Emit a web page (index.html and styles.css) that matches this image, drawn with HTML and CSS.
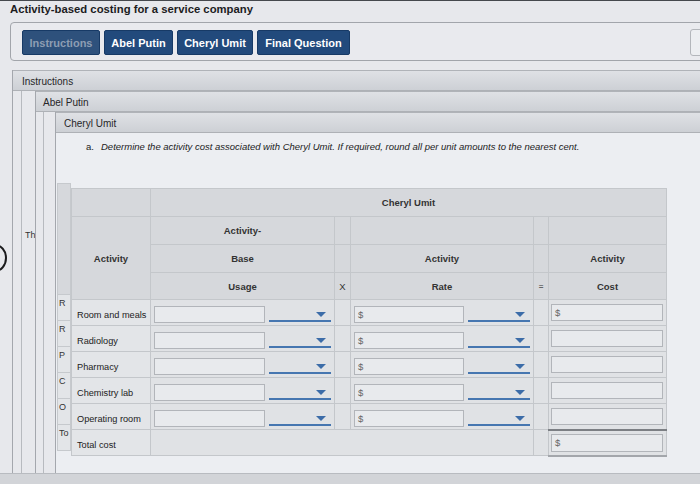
FILE: index.html
```html
<!DOCTYPE html>
<html>
<head>
<meta charset="utf-8">
<title>Activity-based costing for a service company</title>
<link rel="stylesheet" href="styles.css">
</head>
<body>
<div class="page">
  <div class="ring"></div>
  <h1 class="title">Activity-based costing for a service company</h1>
  <div class="tabs">
    <button class="tab tab-current w1">Instructions</button>
    <button class="tab w2">Abel Putin</button>
    <button class="tab w3">Cheryl Umit</button>
    <button class="tab w4">Final Question</button>
    <div class="tab-aux"></div>
  </div>

  <div class="panel p1">
    <div class="panel-head">Instructions</div>
    <div class="panel-body">
      <div class="gutter g1"><div class="gutter-line"><span class="ghost-text">Th</span></div></div>
      <div class="panel p2">
        <div class="panel-head">Abel Putin</div>
        <div class="panel-body">
          <div class="gutter g2"><div class="gutter-line"></div></div>
          <div class="panel p3">
            <div class="panel-head">Cheryl Umit</div>
            <div class="content">
              <p class="question"><span class="q-num">a.</span><em>Determine the activity cost associated with Cheryl Umit. If required, round all per unit amounts to the nearest cent.</em></p>
              <div class="work">
                <div class="ghost-col">
                  <div class="ghost-head"></div>
                  <div class="ghost-cell">R</div>
                  <div class="ghost-cell">R</div>
                  <div class="ghost-cell">P</div>
                  <div class="ghost-cell">C</div>
                  <div class="ghost-cell">O</div>
                  <div class="ghost-cell">To</div>
                </div>
                <table class="grid">
                  <colgroup>
                    <col class="c1"><col class="c2"><col class="c3"><col class="c4"><col class="c5"><col class="c6">
                  </colgroup>
                  <tr class="h1">
                    <th></th>
                    <th colspan="5">Cheryl Umit</th>
                  </tr>
                  <tr class="h2">
                    <th rowspan="3">Activity</th>
                    <th>Activity-</th>
                    <th></th><th></th><th></th><th></th>
                  </tr>
                  <tr class="h3">
                    <th>Base</th>
                    <th></th>
                    <th>Activity</th>
                    <th></th>
                    <th>Activity</th>
                  </tr>
                  <tr class="h4">
                    <th>Usage</th>
                    <th class="op">X</th>
                    <th>Rate</th>
                    <th class="op eq">=</th>
                    <th>Cost</th>
                  </tr>
                  <tr class="row">
                    <td class="label">Room and meals</td>
                    <td><div class="pair"><div class="inp w-usage"></div><div class="dd"><span class="caret"></span></div></div></td>
                    <td></td>
                    <td><div class="pair"><div class="inp w-rate">$</div><div class="dd"><span class="caret"></span></div></div></td>
                    <td></td>
                    <td><div class="cost"><div class="inp w-cost">$</div></div></td>
                  </tr>
                  <tr class="row">
                    <td class="label">Radiology</td>
                    <td><div class="pair"><div class="inp w-usage"></div><div class="dd"><span class="caret"></span></div></div></td>
                    <td></td>
                    <td><div class="pair"><div class="inp w-rate">$</div><div class="dd"><span class="caret"></span></div></div></td>
                    <td></td>
                    <td><div class="cost"><div class="inp w-cost"></div></div></td>
                  </tr>
                  <tr class="row">
                    <td class="label">Pharmacy</td>
                    <td><div class="pair"><div class="inp w-usage"></div><div class="dd"><span class="caret"></span></div></div></td>
                    <td></td>
                    <td><div class="pair"><div class="inp w-rate">$</div><div class="dd"><span class="caret"></span></div></div></td>
                    <td></td>
                    <td><div class="cost"><div class="inp w-cost"></div></div></td>
                  </tr>
                  <tr class="row">
                    <td class="label">Chemistry lab</td>
                    <td><div class="pair"><div class="inp w-usage"></div><div class="dd"><span class="caret"></span></div></div></td>
                    <td></td>
                    <td><div class="pair"><div class="inp w-rate">$</div><div class="dd"><span class="caret"></span></div></div></td>
                    <td></td>
                    <td><div class="cost"><div class="inp w-cost"></div></div></td>
                  </tr>
                  <tr class="row">
                    <td class="label">Operating room</td>
                    <td><div class="pair"><div class="inp w-usage"></div><div class="dd"><span class="caret"></span></div></div></td>
                    <td></td>
                    <td><div class="pair"><div class="inp w-rate">$</div><div class="dd"><span class="caret"></span></div></div></td>
                    <td></td>
                    <td><div class="cost"><div class="inp w-cost"></div></div></td>
                  </tr>
                  <tr class="row total">
                    <td class="label">Total cost</td>
                    <td colspan="3"></td>
                    <td></td>
                    <td class="total-cell"><div class="cost"><div class="inp w-cost">$</div></div></td>
                  </tr>
                </table>
              </div>
            </div>
          </div>
        </div>
      </div>
    </div>
  </div>
  <div class="footer-band"></div>
</div>
</body>
</html>
```

FILE: styles.css
```css
* { box-sizing: border-box; }

html, body {
  margin: 0;
  padding: 0;
  background: #e7e8ec;
}

body {
  font-family: "Liberation Sans", Arial, sans-serif;
  color: #222;
}

.page {
  position: relative;
  width: 700px;
  height: 484px;
  overflow: hidden;
  display: flex;
  flex-direction: column;
  border-top: 1px solid #45484d;
  background: #e7e8ec;
}

.ring {
  position: absolute;
  left: -17px;
  top: 243px;
  width: 24px;
  height: 28px;
  border: 2px solid #1b1b1d;
  border-radius: 50%;
}

.title {
  margin: 0;
  padding: 2px 0 0 10px;
  height: 21px;
  font-size: 11.3px;
  line-height: 13px;
  font-weight: bold;
  color: #1c1c1e;
  white-space: nowrap;
}

.tabs {
  display: flex;
  align-items: flex-start;
  gap: 4px;
  margin-left: 10px;
  width: 700px;
  height: 39px;
  flex: none;
  padding: 7px 0 0 11px;
  border: 1px solid #a2a5ab;
  border-radius: 4px;
  background: #e9eaee;
}

.tab {
  height: 25px;
  padding: 0;
  border: 1px solid #173a66;
  border-radius: 2px;
  background: #224a7c;
  color: #ffffff;
  font-family: "Liberation Sans", Arial, sans-serif;
  font-size: 11px;
  font-weight: bold;
  text-align: center;
}

.tab-current {
  background: #2e517c;
  color: #8d9db3;
}

.w1 { width: 78px; }
.w2 { width: 69px; }
.w3 { width: 76px; }
.w4 { width: 93px; }

.tab-aux {
  margin-left: auto;
  margin-right: -2px;
  width: 21px;
  height: 27px;
  margin-top: -1px;
  border: 1px solid #b3b6bb;
  border-radius: 3px;
  background: #eceef1;
}

.panel {
  display: flex;
  flex-direction: column;
  min-width: 0;
  border-left: 1px solid #a4a7ad;
}

.p1 {
  margin: 9px 0 0 12px;
  flex: 1;
}

.p2, .p3 {
  flex: 1;
}

.panel-head {
  flex: none;
  height: 21px;
  padding-left: 8px;
  border-top: 1px solid #b0b3b8;
  border-bottom: 1px solid #aeb1b6;
  background: linear-gradient(#dfe1e5, #cdd0d5);
  font-size: 10px;
  line-height: 22px;
  color: #262628;
  white-space: nowrap;
}

.p1 > .panel-head { padding-left: 9px; }
.p2 > .panel-head { padding-left: 7px; }

.panel-body {
  flex: 1;
  display: flex;
  min-height: 0;
}

.gutter {
  flex: none;
  overflow: hidden;
  display: flex;
}

.g1 { width: 22px; padding-left: 8px; }
.g2 { width: 19px; padding-left: 7px; }

.gutter-line {
  flex: 1;
  border-left: 1px solid #b7babf;
}

.g1 .gutter-line { padding: 133px 0 0 3px; }

.ghost-text {
  font-size: 9px;
  color: #333;
  white-space: nowrap;
}

.content {
  flex: 1;
  background: #eceef2;
  min-height: 0;
}

.question {
  margin: 0;
  padding: 7px 0 0 30px;
  height: 50px;
  font-size: 9.5px;
  line-height: 13px;
  color: #222;
  white-space: nowrap;
}

.q-num {
  display: inline-block;
  width: 15px;
}

.question em { font-style: italic; }

.work {
  display: flex;
  align-items: flex-start;
}

.ghost-col {
  width: 14px;
  flex: none;
  margin-left: 1px;
  overflow: hidden;
}

.ghost-head {
  height: 112px;
  background: #d6d8dc;
  border: 1px solid #c6c9cd;
}

.ghost-cell {
  height: 26px;
  border: 1px solid #c6c9cd;
  border-top: none;
  padding: 3px 0 0 1px;
  font-size: 9px;
  line-height: 10px;
  background: #e3e5e8;
  color: #333;
  white-space: nowrap;
}

.grid {
  margin-top: 5px;
  border-collapse: collapse;
  table-layout: fixed;
  width: 595px;
}

.c1 { width: 79px; }
.c2 { width: 184px; }
.c3 { width: 16px; }
.c4 { width: 183px; }
.c5 { width: 15px; }
.c6 { width: 118px; }

.grid th, .grid td {
  border: 1px solid #c4c7cb;
  padding: 0;
}

.grid th {
  background: #d6d8dc;
  font-size: 9.5px;
  font-weight: bold;
  color: #333;
  text-align: center;
}

.h1 { height: 28px; }
.h2 { height: 28px; }
.h3 { height: 28px; }
.h4 { height: 27px; }

.grid th.op {
  font-weight: normal;
  font-size: 9.5px;
}

.grid th.eq {
  font-weight: bold;
  font-size: 8px;
  color: #666;
}

.grid td {
  background: #e0e2e5;
  height: 26px;
  vertical-align: top;
}

.grid td.label {
  font-size: 9.2px;
  color: #222;
  padding: 10px 0 0 5px;
  white-space: nowrap;
  background: #e3e5e8;
}

.pair {
  display: flex;
  align-items: flex-start;
  gap: 4px;
  padding: 6px 0 0 3px;
}

.cost {
  padding: 4px 0 0 2px;
}

.inp {
  height: 17px;
  border: 1px solid #b2b5ba;
  background: #e8eaed;
  font-size: 9.5px;
  line-height: 15px;
  color: #666;
  padding-left: 3px;
}

.w-usage { width: 111px; }
.w-rate { width: 110px; }
.w-cost { width: 112px; }

.dd {
  width: 62px;
  height: 16px;
  border-bottom: 2px solid #4676b0;
  display: flex;
  justify-content: flex-end;
  align-items: center;
  padding: 2px 5px 0 0;
}

.caret {
  width: 0;
  height: 0;
  border-left: 5px solid transparent;
  border-right: 5px solid transparent;
  border-top: 5px solid #3c6ca8;
}

.total td {
  height: 26px;
}

.grid td.total-cell {
  border-top: 2px solid #7c7f84;
  border-bottom: 2px solid #a3a6ab;
}

.total-cell .cost {
  padding-top: 3px;
}

.total-cell .inp {
  height: 18px;
}

.footer-band {
  flex: none;
  height: 11px;
  border-top: 1px solid #b8bbc0;
  background: #d2d4d8;
}
```
